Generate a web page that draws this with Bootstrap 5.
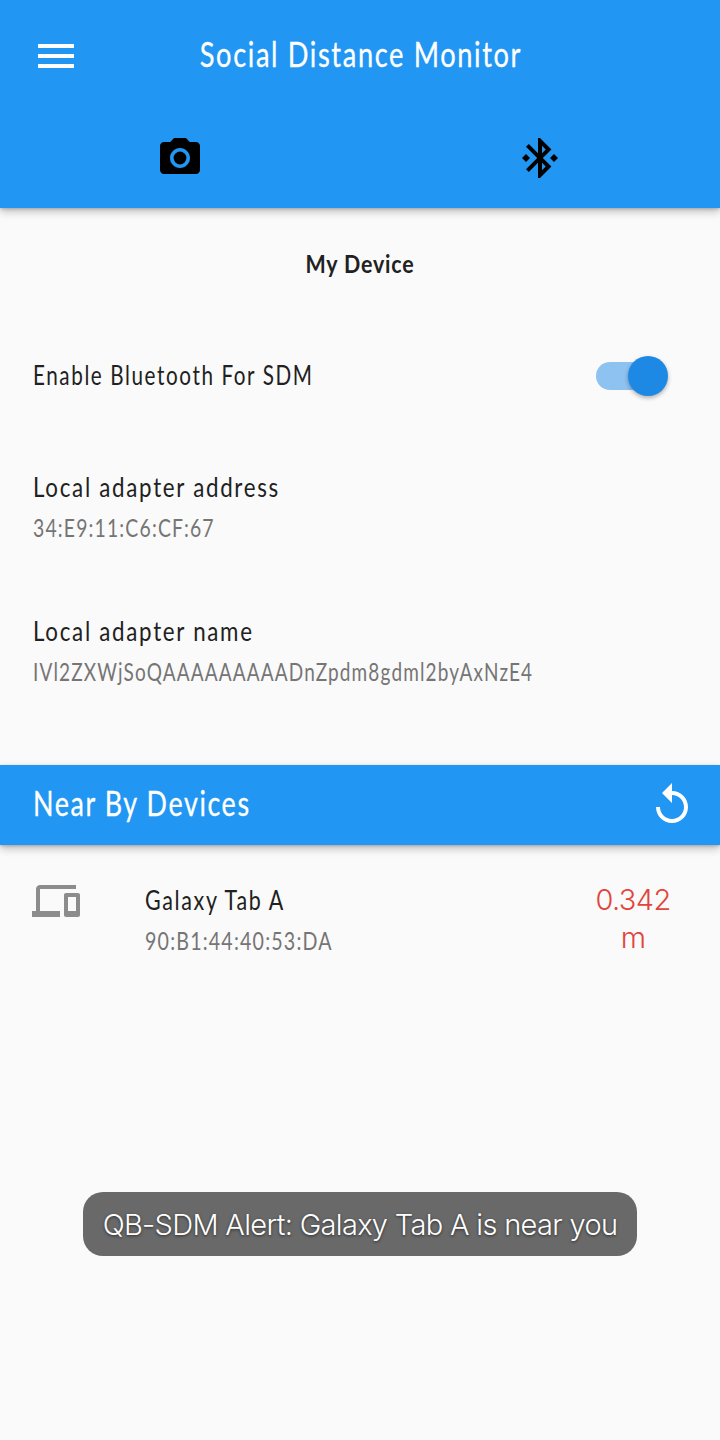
<!DOCTYPE html>
<html lang="en">
<head>
<meta charset="utf-8">
<meta name="viewport" content="width=device-width, initial-scale=1">
<title>Social Distance Monitor</title>
<link href="https://cdn.jsdelivr.net/npm/bootstrap@5.3.0/dist/css/bootstrap.min.css" rel="stylesheet">
<script src="https://cdn.jsdelivr.net/npm/bootstrap@5.3.0/dist/js/bootstrap.bundle.min.js"></script>
<style>
body{background:#fafafa;color:#212121;font-family:Lato,sans-serif;height:1440px;overflow:hidden}
.icon{width:48px;height:48px;fill:currentColor;display:block;flex:none}
.bar{background:#2196f3;box-shadow:0 4px 8px rgba(0,0,0,.22),0 1px 3px rgba(0,0,0,.2)}
.app-header{height:208px}
.app-title-row{height:112px;padding:0 79px 0 32px}
.tab-row{height:92px}
.headline,.label,.detail,.section-title{display:inline-block;white-space:nowrap;transform-origin:left center}
.headline{font-size:34px;line-height:40px;letter-spacing:2px;-webkit-text-stroke:.3px currentColor}
.label{font-size:26px;line-height:41px;letter-spacing:2px}
.detail{font-size:25px;line-height:39px;letter-spacing:1.5px;color:#757575}
.section-title{font-size:25.5px;line-height:40px;font-weight:700;letter-spacing:1px;transform-origin:center;transform:scaleX(.84)}
.app-title{transform-origin:center;transform:scaleX(.802)}
.near-title{transform:scaleX(.791);margin-bottom:5px}
.sx-enable{transform:scaleX(.795)}
.sx-local{transform:scaleX(.858)}
.sx-name{transform:scaleX(.76)}
.sx-addr{transform:scaleX(.775)}
.sx-device{transform:scaleX(.825)}
.sx-device-addr{transform:scaleX(.786)}
.setting-row{height:112px;padding-bottom:2px}
.tile{height:144px;padding:35px 33px 0}
.my-device{height:557px}
.enable-row{padding:0 56px 0 33px}
.track{width:68px;height:28px;border-radius:14px;background:#8ec2f1}
.thumb{width:40px;height:40px;border-radius:50%;background:#1e88e5;top:-6px;right:-4px;box-shadow:0 2px 4px rgba(0,0,0,.3)}
.near-bar{height:80px;padding:0 24px 0 33px}
.device-row{padding:35px 33px 0 32px}
.device-icon{margin-right:65px;margin-top:-3px;color:#8c8c8c}
.distance{width:76px;margin-top:1px;font:300 29px/38px Inter,sans-serif;letter-spacing:-.6px;color:#e2453b}
.toast-msg{left:83px;top:1192px;width:554px;height:64px;border-radius:20px;background:#696969;color:#fff;font:300 29px/66px Inter,sans-serif;letter-spacing:-.67px;text-shadow:0 1px 3px rgba(0,0,0,.6);white-space:nowrap}
</style>
</head>
<body class="position-relative">
<header class="bar app-header">
  <div class="app-title-row d-flex align-items-center text-white">
    <svg class="icon" viewBox="0 0 24 24"><path d="M3 18h18v-2H3v2zm0-5h18v-2H3v2zm0-7v2h18V6H3z"/></svg>
    <div class="flex-grow-1 d-flex justify-content-center pb-1"><span class="headline app-title">Social Distance Monitor</span></div>
  </div>
  <div class="row g-0 tab-row align-items-center text-black">
    <div class="col d-flex justify-content-center"><svg class="icon" viewBox="0 0 24 24"><circle cx="12" cy="12" r="3.2"/><path d="M9 2L7.17 4H4c-1.1 0-2 .9-2 2v12c0 1.1.9 2 2 2h16c1.1 0 2-.9 2-2V6c0-1.1-.9-2-2-2h-3.17L15 2H9zm3 15c-2.76 0-5-2.24-5-5s2.24-5 5-5 5 2.24 5 5-2.24 5-5 5z"/></svg></div>
    <div class="col d-flex justify-content-center"><svg class="icon" viewBox="0 0 24 24"><path d="M7 12l-2-2-2 2 2 2 2-2zm10.71-4.29L12 2h-1v7.59L6.41 5 5 6.41 10.59 12 5 17.59 6.41 19 11 14.41V22h1l5.71-5.71-4.3-4.29 4.3-4.29zM13 5.83l1.88 1.88L13 9.59V5.83zm1.88 10.46L13 18.17v-3.76l1.88 1.88zM19 10l-2 2 2 2 2-2-2-2z"/></svg></div>
  </div>
</header>

<section class="my-device">
  <div class="setting-row d-flex align-items-center justify-content-center"><span class="section-title">My Device</span></div>
  <div class="enable-row d-flex align-items-center justify-content-between">
    <div class="setting-row d-flex align-items-center"><span class="label sx-enable">Enable Bluetooth For SDM</span></div>
    <div class="track position-relative" role="switch" aria-checked="true"><div class="thumb position-absolute"></div></div>
  </div>
  <div class="tile">
    <div><span class="label sx-local">Local adapter address</span></div>
    <div><span class="detail sx-addr">34:E9:11:C6:CF:67</span></div>
  </div>
  <div class="tile">
    <div><span class="label sx-local">Local adapter name</span></div>
    <div><span class="detail sx-name">IVl2ZXWjSoQAAAAAAAAADnZpdm8gdml2byAxNzE4</span></div>
  </div>
</section>

<div class="bar near-bar d-flex align-items-center justify-content-between text-white">
  <span class="headline near-title">Near By Devices</span>
  <svg class="icon" viewBox="0 0 24 24"><path d="M12 5V1L7 6l5 5V7c3.31 0 6 2.69 6 6s-2.69 6-6 6-6-2.69-6-6H4c0 4.42 3.58 8 8 8s8-3.58 8-8-3.58-8-8-8z"/></svg>
</div>
<div class="device-row d-flex align-items-start">
  <svg class="icon device-icon" viewBox="0 0 24 24"><path d="M3 6h19V4H4c-1.1 0-2 .9-2 2v11H0v3h14v-3H4V6zm20 2h-6c-.55 0-1 .45-1 1v10c0 .55.45 1 1 1h6c.55 0 1-.45 1-1V9c0-.55-.45-1-1-1zm-1 9h-4v-7h4v7z"/></svg>
  <div class="flex-grow-1">
    <div><span class="label sx-device">Galaxy Tab A</span></div>
    <div><span class="detail sx-device-addr">90:B1:44:40:53:DA</span></div>
  </div>
  <div class="distance text-center me-3">0.342 m</div>
</div>

<div class="toast-msg position-absolute text-center" role="status">QB-SDM Alert: Galaxy Tab A is near you</div>
</body>
</html>
